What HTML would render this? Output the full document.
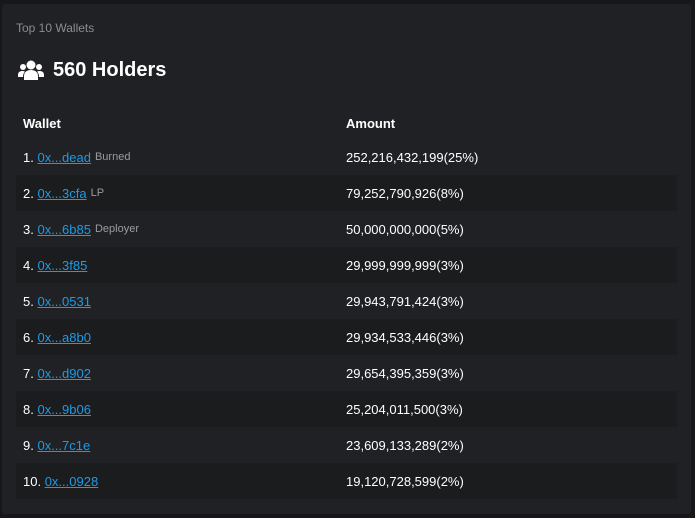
<!DOCTYPE html>
<html><head><style>
body{margin:0;width:695px;height:518px;background:#16171a;font-family:"Liberation Sans",sans-serif;overflow:hidden}
.card{position:absolute;left:2px;top:4px;width:689px;height:510px;background:#202124;border-radius:3px}
.t{position:absolute;left:14px;top:17px;color:#8a8c90;font-size:12px}
.h{position:absolute;left:16px;top:55px;color:#fff;font-size:20px;font-weight:bold;display:flex;align-items:center}
.h svg{margin-right:9px}
table{position:absolute;left:14px;top:103px;width:661px;border-collapse:collapse;font-size:13px;color:#fff}
th{text-align:left;height:32px;padding:0 0 0 7px;font-weight:bold}
td{height:36px;padding:0 0 0 7px}
tr.r:nth-child(odd) td{background:#1b1c1e}
tr.r:nth-child(even) td{background:#202124}
a{color:#1e9be6;text-decoration:underline}
small{color:#9a9ca0;font-size:11px;margin-left:4px;vertical-align:2px}
td:nth-child(2),th:nth-child(2){padding-left:7px}
</style></head><body><div class="card">
<div class="t">Top 10 Wallets</div>
<div class="h"><svg width="26" height="21" viewBox="0 0 26 21" fill="#fff"><circle cx="13" cy="5" r="4.5"/><circle cx="5" cy="7" r="3"/><circle cx="21" cy="7" r="3"/><path d="M6 20v-4c0-4 3-6 7-6s7 2 7 6v4z"/><path d="M0 17v-2c0-3 2-4 4.5-4 1 0 2 .3 2.5.8C5.5 13 5 15 5 17z"/><path d="M26 17v-2c0-3-2-4-4.5-4-1 0-2 .3-2.5.8C20.5 13 21 15 21 17z"/></svg>560 Holders</div>
<table>
<tr><th style="width:316px">Wallet</th><th>Amount</th></tr>
<tr class="r"><td>1. <a>0x...dead</a><small>Burned</small></td><td>252,216,432,199(25%)</td></tr>
<tr class="r"><td>2. <a>0x...3cfa</a><small>LP</small></td><td>79,252,790,926(8%)</td></tr>
<tr class="r"><td>3. <a>0x...6b85</a><small>Deployer</small></td><td>50,000,000,000(5%)</td></tr>
<tr class="r"><td>4. <a>0x...3f85</a></td><td>29,999,999,999(3%)</td></tr>
<tr class="r"><td>5. <a>0x...0531</a></td><td>29,943,791,424(3%)</td></tr>
<tr class="r"><td>6. <a>0x...a8b0</a></td><td>29,934,533,446(3%)</td></tr>
<tr class="r"><td>7. <a>0x...d902</a></td><td>29,654,395,359(3%)</td></tr>
<tr class="r"><td>8. <a>0x...9b06</a></td><td>25,204,011,500(3%)</td></tr>
<tr class="r"><td>9. <a>0x...7c1e</a></td><td>23,609,133,289(2%)</td></tr>
<tr class="r"><td>10. <a>0x...0928</a></td><td>19,120,728,599(2%)</td></tr>
</table></div></body></html>
